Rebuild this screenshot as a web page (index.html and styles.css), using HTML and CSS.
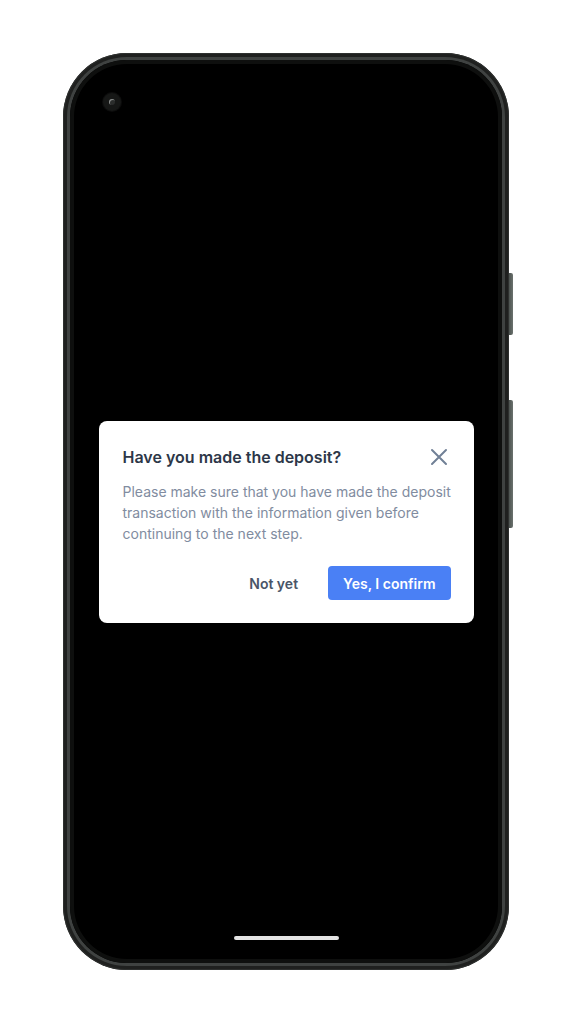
FILE: index.html
```html
<!DOCTYPE html>
<html lang="en">
<head>
<meta charset="UTF-8">
<title>Deposit confirmation</title>
<meta name="viewport" content="width=device-width, initial-scale=1.0">
<link rel="stylesheet" href="styles.css">
</head>
<body>
    <div class="phone">
        <span class="side-btn side-btn-top"></span>
        <span class="side-btn side-btn-bottom"></span>
        <div class="bezel">
            <div class="screen">
                <span class="camera"><i></i></span>

                <div class="dialog">
                    <div class="dialog-head">
                        <h2 class="dialog-title">Have you made the deposit?</h2>
                        <a href="javascript:;" class="dialog-close">
                            <svg width="24" height="24" viewBox="0 0 24 24" fill="none" stroke="#718096" stroke-width="2" stroke-linecap="round">
                                <path d="M5 5L19 19M19 5L5 19"/>
                            </svg>
                        </a>
                    </div>
                    <p class="dialog-text">Please make sure that you have made the deposit transaction with the information given before continuing to the next step.</p>
                    <div class="dialog-actions">
                        <a href="javascript:;" class="btn btn-ghost">Not yet</a>
                        <a href="javascript:;" class="btn btn-primary">Yes, I confirm</a>
                    </div>
                </div>

                <span class="home-bar"></span>
            </div>
        </div>
    </div>
</body>
</html>
```

FILE: styles.css
```css
*{margin:0;padding:0;box-sizing:border-box;}
body{background:#fff;font-family:Inter,"Liberation Sans",sans-serif;}
a{text-decoration:none;}

/* phone frame */
.phone{position:relative;width:446px;height:917px;margin:53px 0 0 63px;padding:4px;border-radius:64px;background:#1f201f;box-shadow:inset 0 0 0 1px #2e302f;}
.bezel{height:100%;padding:3px;border-radius:60px;background:#3f4241;}
.screen{position:relative;height:100%;border-radius:57px;background:#000;box-shadow:inset 0 0 0 4px #0e0f0e;display:flex;flex-direction:column;align-items:center;padding:361px 0 23px;}

.side-btn{position:absolute;right:-4px;width:4px;border-radius:0 2px 2px 0;background:linear-gradient(90deg,#4c524f,#6b726e);}
.side-btn-top{top:220px;height:62px;}
.side-btn-bottom{top:347px;height:128px;}

.camera{position:absolute;left:33px;top:33px;width:18px;height:18px;border-radius:50%;background:#161716;box-shadow:0 0 0 1px #0c0c0c;display:flex;align-items:center;justify-content:center;}
.camera i{width:6px;height:6px;border-radius:50%;background:#2b2d2c;box-shadow:inset 1px 1px 0 #8a8d8c;}

.home-bar{margin-top:auto;width:105px;height:4px;border-radius:2px;background:#e4e4e4;}

/* dialog */
.dialog{width:375px;background:#fff;border-radius:8px;padding:24px 23px 23px 24px;}
.dialog-head{display:flex;align-items:center;justify-content:space-between;}
.dialog-title{font-size:16px;line-height:24px;font-weight:600;color:#2d3748;}
.dialog-close{display:block;width:24px;height:24px;}
.dialog-close svg{display:block;}
.dialog-text{margin:12px -6px 0 0;font-size:14px;line-height:21px;color:#818ca0;}

.dialog-actions{display:flex;justify-content:flex-end;gap:15px;margin-top:22px;}
.btn{display:flex;align-items:center;height:34px;padding:0 15px;border-radius:4px;font-size:14px;font-weight:600;}
.btn-ghost{color:#4a5568;}
.btn-primary{background:#4a80f5;color:#fff;}
```
